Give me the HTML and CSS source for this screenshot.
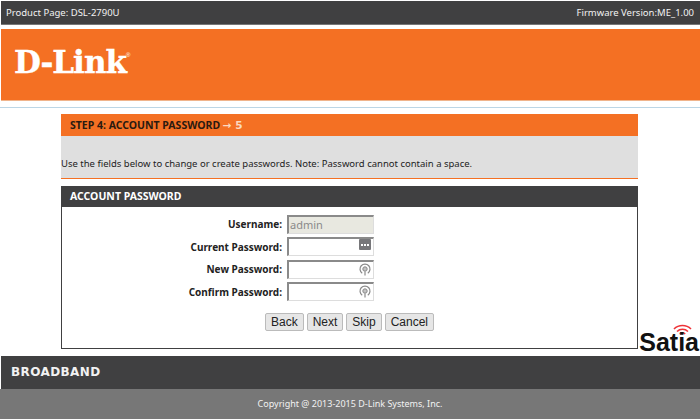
FILE: index.html
```html
<!DOCTYPE html>
<html lang="en">
<head>
    <meta charset="UTF-8">
    <title>D-Link DSL-2790U - Setup Wizard</title>
    <link rel="stylesheet" href="styles.css">
</head>
<body>

    <div class="top-bar">
        <span>Product Page: DSL-2790U</span>
        <span>Firmware Version:ME_1.00</span>
    </div>

    <div class="banner">
        <span class="logo">D-Link<sup class="logo-reg">&reg;</sup></span>
    </div>

    <div class="rule"></div>

    <div class="container">
        <div class="step-title">STEP 4: ACCOUNT PASSWORD <span class="step-next">&rarr; 5</span></div>
        <div class="step-note">Use the fields below to change or create passwords. Note: Password cannot contain a space.</div>

        <div class="panel">
            <div class="panel-title">ACCOUNT PASSWORD</div>
            <div class="panel-body">
                <div class="form-group">
                    <label for="username">Username:</label>
                    <input type="text" id="username" class="readonly" value="admin" readonly>
                </div>
                <div class="form-group">
                    <label for="current-password">Current Password:</label>
                    <div class="field">
                        <input type="password" id="current-password">
                        <svg class="field-icon" width="12" height="11" viewBox="0 0 12 11">
                            <rect width="12" height="11" rx="1" fill="#77777a"/>
                            <rect x="2" y="5" width="2" height="2" fill="#fff"/>
                            <rect x="5" y="5" width="2" height="2" fill="#fff"/>
                            <rect x="8" y="5" width="2" height="2" fill="#fff"/>
                        </svg>
                    </div>
                </div>
                <div class="form-group">
                    <label for="new-password">New Password:</label>
                    <div class="field">
                        <input type="password" id="new-password">
                        <svg class="field-icon" width="12" height="14" viewBox="0 0 12 14">
                            <path d="M3.2 11.2a5 5 0 1 1 5.6 0" fill="none" stroke="#8a8a8a" stroke-width="1.2"/>
                            <circle cx="6" cy="7" r="2.2" fill="#c4c4c4" stroke="#8a8a8a" stroke-width="1"/>
                            <path d="M6 9.5v4" stroke="#8a8a8a" stroke-width="1.2"/>
                        </svg>
                    </div>
                </div>
                <div class="form-group">
                    <label for="confirm-password">Confirm Password:</label>
                    <div class="field">
                        <input type="password" id="confirm-password">
                        <svg class="field-icon" width="12" height="14" viewBox="0 0 12 14">
                            <path d="M3.2 11.2a5 5 0 1 1 5.6 0" fill="none" stroke="#8a8a8a" stroke-width="1.2"/>
                            <circle cx="6" cy="7" r="2.2" fill="#c4c4c4" stroke="#8a8a8a" stroke-width="1"/>
                            <path d="M6 9.5v4" stroke="#8a8a8a" stroke-width="1.2"/>
                        </svg>
                    </div>
                </div>
                <div class="buttons">
                    <button>Back</button>
                    <button>Next</button>
                    <button>Skip</button>
                    <button>Cancel</button>
                </div>
            </div>
        </div>
    </div>

    <div class="watermark">
        <svg class="watermark-waves" width="19" height="11" viewBox="0 0 19 11">
            <path d="M1 5a12 12 0 0 1 17 0M4 7.5a8 8 0 0 1 11 0M6.8 10a4 4 0 0 1 5.4 0" fill="none" stroke="#ee3338" stroke-width="1.6"/>
        </svg>
        <span>Satia</span>
    </div>

    <div class="footer-brand">BROADBAND</div>
    <div class="footer-copy">Copyright @ 2013-2015 D-Link Systems, Inc.</div>

</body>
</html>
```

FILE: styles.css
```css
html, body {
    height: 419px;
    overflow: hidden;
}

body {
    font-family: 'Noto Sans', sans-serif;
    font-size: 9.5px;
    background-color: #fff;
    color: #222;
    margin: 0;
    padding: 0;
    position: relative;
}

.top-bar {
    background-color: #404041;
    color: #f2f2f2;
    height: 23px;
    margin: 1px 0 0 1px;
    padding: 0 6px 0 5px;
    display: flex;
    justify-content: space-between;
    align-items: center;
    border-bottom: 1px solid #777;
}

.banner {
    background-color: #f47023;
    height: 72px;
    box-sizing: border-box;
    margin: 4px 0 0 1px;
    padding-left: 13px;
    display: flex;
    align-items: center;
    border-bottom: 1px solid #f0b48c;
}

.logo {
    font-family: 'DejaVu Serif', serif;
    font-weight: bold;
    font-size: 31px;
    letter-spacing: -1px;
    color: #fff;
    margin-top: -5px;
    -webkit-text-stroke: 0.4px #fff;
}

.logo-reg {
    font-family: 'Liberation Sans', sans-serif;
    font-size: 6px;
    font-weight: normal;
    vertical-align: 16px;
    line-height: 0;
    letter-spacing: 0;
    -webkit-text-stroke: 0;
}

.rule {
    height: 1px;
    margin-top: 6px;
    background-color: #bcd6e6;
}

.container {
    width: 577px;
    margin: 6px 0 0 61px;
}

.step-title {
    background-color: #f47023;
    color: #2a1a10;
    font-size: 10.5px;
    font-weight: bold;
    height: 22px;
    line-height: 22px;
    padding-left: 9px;
}

.step-next {
    font-family: 'DejaVu Sans', sans-serif;
    color: #fbd9c0;
}

.step-note {
    background-color: #dfdfdf;
    height: 43px;
    display: flex;
    align-items: flex-end;
    padding-bottom: 8px;
    box-sizing: border-box;
    border-bottom: 1px solid #f47023;
}

.panel {
    margin-top: 7px;
    height: 163px;
    box-sizing: border-box;
    border: 1px solid #404041;
    border-top: none;
    display: flex;
    flex-direction: column;
}

.panel-title {
    background-color: #404041;
    color: #fff;
    font-size: 10.5px;
    font-weight: bold;
    height: 21px;
    line-height: 21px;
    margin: 0 -1px;
    padding-left: 9px;
}

.panel-body {
    padding-top: 6px;
}

.form-group {
    display: flex;
    align-items: center;
    height: 22.5px;
}

.form-group label {
    width: 220px;
    margin-right: 5px;
    text-align: right;
    font-size: 10px;
    font-weight: bold;
    color: #222;
}

.form-group input {
    width: 87px;
    height: 19px;
    box-sizing: border-box;
    padding: 0 1px;
    font-family: inherit;
    font-size: 11px;
    border: 1px solid #ddd;
    border-top: 2px solid #8a8a8a;
    border-left: 2px solid #8a8a8a;
    background-color: #fff;
    outline: none;
}

.form-group input.readonly {
    background-color: #e8e8e0;
    color: #8a8a8a;
}

.field {
    position: relative;
    display: flex;
}

.field-icon {
    position: absolute;
    right: 3px;
    top: 2px;
}

.buttons {
    display: flex;
    justify-content: center;
    gap: 3px;
    margin-top: 10px;
}

.buttons button {
    height: 18px;
    padding: 0 5px;
    font-family: 'Liberation Sans', sans-serif;
    font-size: 12px;
    color: #222;
    background-color: #e6e6e6;
    border: 1px solid #bbb;
    border-radius: 2px;
}

.watermark {
    position: absolute;
    right: 0;
    top: 323px;
    width: 62px;
    height: 31px;
    font-family: 'Liberation Sans', sans-serif;
    font-weight: bold;
    font-size: 25px;
    line-height: 22px;
    color: #111;
}

.watermark span {
    position: absolute;
    right: 1px;
    bottom: 1px;
}

.watermark-waves {
    position: absolute;
    right: 8px;
    top: 1px;
}

.footer-brand {
    background-color: #404041;
    color: #f2f2f2;
    font-family: 'DejaVu Sans', sans-serif;
    font-weight: bold;
    font-size: 12px;
    letter-spacing: 0.4px;
    height: 33px;
    line-height: 33px;
    margin: 7px 0 0 1px;
    padding-left: 10px;
}

.footer-copy {
    background-color: #777;
    color: #f2f2f2;
    font-size: 9px;
    height: 30px;
    line-height: 30px;
    text-align: center;
}
```
